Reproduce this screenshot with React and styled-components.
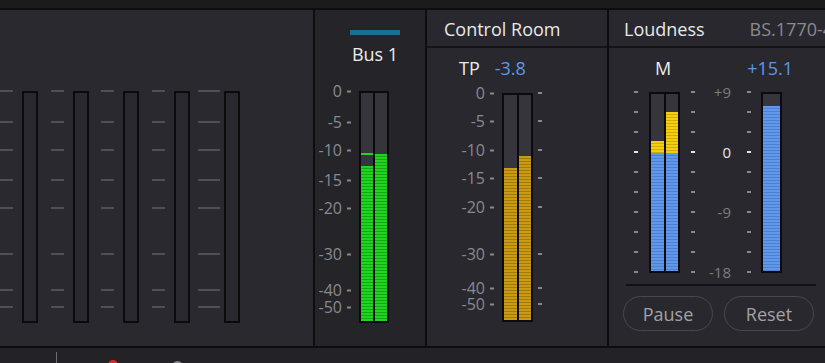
import React from 'react';
import styled, { createGlobalStyle } from 'styled-components';

const GlobalStyle = createGlobalStyle`
  html, body {
    margin: 0;
    padding: 0;
    background: #1b1b1c;
  }
  body {
    font-family: "Open Sans", "Noto Sans", sans-serif;
  }
`;

const DB_LABELS = ['0', '-5', '-10', '-15', '-20', '-30', '-40', '-50'];
const MIX_MARKS = [0, 31, 59, 89, 117, 163, 199, 216];
const CR_MARKS = [0, 28, 57, 85, 114, 161, 195, 211];
const LU_ROWS = ['+9', '', '', '0', '', '', '-9', '', '', '-18'];

const TONES = {
  green: ['#22d422', '#13a913'],
  gold: ['#c99a12', '#a07a0a'],
  yellow: ['#f5ce10', '#cdac06'],
  blue: ['#6098ea', '#4c80d2'],
};

const Screen = styled.div`
  width: 825px;
  height: 363px;
  display: flex;
  flex-direction: column;
  overflow: hidden;
  background: #0d0d0f;
`;

const TopStrip = styled.div`
  flex: none;
  height: 8px;
  background: #1b1b1c;
  border-bottom: 2px solid #0d0d0f;
`;

const Panels = styled.div`
  flex: none;
  display: flex;
  gap: 2px;
  height: 336px;
  overflow: hidden;
  background: #0d0d0f;
  border-bottom: 2px solid #0d0d0f;
`;

const Panel = styled.div`
  flex: none;
  width: ${p => p.$w}px;
  display: flex;
  flex-direction: column;
  background: ${p => p.$bg || '#28282e'};
`;

const PanelHeader = styled.div`
  display: flex;
  align-items: center;
  height: 34px;
  padding: 2px 0 0 ${p => p.$pad}px;
  border-bottom: 2px solid #141417;
  font-size: 18px;
  color: #e8e8e8;
  white-space: nowrap;
`;

const Standard = styled.span`
  margin-left: 45px;
  color: #8a8a8e;
`;

/* meters */
const MeterBox = styled.div`
  flex: none;
  box-sizing: border-box;
  display: flex;
  gap: 2px;
  width: ${p => p.$w}px;
  height: ${p => p.$h}px;
  margin-top: ${p => p.$top || 0}px;
  margin-left: ${p => p.$left || 0}px;
  border: 2px solid #0b0b0d;
  background: #0b0b0d;
`;

const Lane = styled.div`
  flex: 1;
  display: flex;
  flex-direction: column;
  justify-content: flex-end;
  background: ${p => p.$bg || '#35353b'};
`;

const Fill = styled.div`
  flex: none;
  height: ${p => p.$h}px;
  background: repeating-linear-gradient(
    to bottom,
    ${p => TONES[p.$tone][0]} 0 2px,
    ${p => TONES[p.$tone][1]} 2px 3px
  );
`;

const Hold = styled.div`
  flex: none;
  height: 2px;
  margin-bottom: ${p => p.$gap}px;
  background: ${p => TONES[p.$tone][0]};
`;

/* dB scales */
const DbScale = styled.div`
  position: relative;
  flex: none;
  width: ${p => p.$w}px;
  height: ${p => p.$h}px;
  margin-left: ${p => p.$left || 0}px;
`;

const DbMark = styled.div`
  position: absolute;
  right: 0;
  top: ${p => p.$y}px;
  transform: translateY(-50%);
  display: flex;
  align-items: center;
  gap: 5px;
  font-size: 16px;
  line-height: 13px;
  color: #8a8a8e;
  white-space: nowrap;
`;

const Tick = styled.span`
  display: block;
  width: 4px;
  height: 2px;
  background: ${p => (p.$bright ? '#e6e6e6' : '#88888c')};
`;

/* mixer (left) */
const Mixer = styled.div`
  display: grid;
  grid-template-columns: repeat(5, 50.5px);
  padding-top: 81px;
`;

const Strip = styled.div`
  display: grid;
  grid-template-columns: 22px 16px;
`;

const GuideCol = styled.div`
  position: relative;
  width: ${p => p.$w}px;
  height: 232px;
  margin-left: ${p => p.$shift || 0}px;
`;

const Guide = styled.div`
  position: absolute;
  left: 0;
  right: 0;
  top: ${p => p.$y}px;
  height: 2px;
  transform: translateY(-50%);
  background: #4f4f56;
`;

/* bus */
const BusHead = styled.div`
  display: flex;
  flex-direction: column;
  align-items: center;
  padding: 20px 0 0 10px;
`;

const BusColor = styled.div`
  width: 50px;
  height: 5px;
  background: #1b6e90;
`;

const BusName = styled.div`
  margin-top: 7px;
  font-size: 18px;
  line-height: 24px;
  color: #ececec;
`;

const MeterRow = styled.div`
  display: flex;
  align-items: flex-start;
  margin-top: ${p => p.$top || 0}px;
  padding-left: ${p => p.$pad || 0}px;
`;

/* control room */
const Readout = styled.div`
  display: flex;
  padding: 8px 0 0 ${p => p.$pad}px;
  font-size: 18px;
  line-height: 24px;
  color: #ececec;
`;

const Value = styled.span`
  margin-left: ${p => p.$gap}px;
  color: #5a98ec;
`;

/* loudness */
const LuScale = styled.div`
  flex: none;
  display: flex;
  flex-direction: column;
  width: ${p => p.$w}px;
  margin-left: ${p => p.$left || 0}px;
`;

const LuRow = styled.div`
  height: 20px;
  display: flex;
  align-items: center;
  justify-content: flex-end;
  font-size: 15px;
  color: ${p => (p.$bright ? '#e6e6e6' : '#7c7c80')};
`;

const Rule = styled.div`
  height: 2px;
  width: 190px;
  margin: 2px 0 0 17px;
  background: #111114;
`;

const Buttons = styled.div`
  display: flex;
  gap: 11px;
  margin: 10px 0 0 14px;
`;

const Pill = styled.button`
  width: 90px;
  height: 35px;
  padding: 0;
  border: 1.5px solid #47474d;
  border-radius: 18px;
  background: transparent;
  color: #a2a2a4;
  font-family: "Open Sans", "Noto Sans", sans-serif;
  font-size: 18px;
`;

/* status bar */
const StatusBar = styled.div`
  flex: 1;
  display: flex;
  align-items: flex-start;
  padding: 4px 0 0 56px;
  background: #222227;
  overflow: hidden;
`;

const Divider = styled.div`
  flex: none;
  width: 1px;
  height: 14px;
  background: #6e6e70;
`;

const RecDot = styled.div`
  flex: none;
  width: 10px;
  height: 10px;
  margin: 8px 0 0 51px;
  border-radius: 50%;
  background: #d32a2a;
`;

const Ring = styled.div`
  flex: none;
  width: 7px;
  height: 7px;
  margin: 9px 0 0 54px;
  border: 2px solid #8a8a8e;
  border-radius: 50%;
`;

const DbLabels = ({ marks, width, height, left, labels = true }) => (
  <DbScale $w={width} $h={height} $left={left}>
    {marks.map((y, i) => (
      <DbMark key={i} $y={y}>
        {labels && DB_LABELS[i]}
        <Tick />
      </DbMark>
    ))}
  </DbScale>
);

const LuTicks = ({ left }) => (
  <LuScale $w={4} $left={left}>
    {LU_ROWS.map((v, i) => (
      <LuRow key={i}>
        <Tick $bright={v === '0'} />
      </LuRow>
    ))}
  </LuScale>
);

const App = () => (
  <>
    <GlobalStyle />
    <Screen>
      <TopStrip />
      <Panels>
        <Panel $w={313} $bg="#29292f">
          <Mixer>
            {[0, 1, 2, 3, 4].map(i => (
              <Strip key={i}>
                <GuideCol $w={i === 4 ? 22 : 13} $shift={i === 4 ? -4 : 0}>
                  {MIX_MARKS.map(y => (
                    <Guide key={y} $y={y} />
                  ))}
                </GuideCol>
                <MeterBox $w={16} $h={232}>
                  <Lane $bg="#29292f" />
                </MeterBox>
              </Strip>
            ))}
          </Mixer>
        </Panel>

        <Panel $w={110} $bg="#242429">
          <BusHead>
            <BusColor />
            <BusName>Bus 1</BusName>
          </BusHead>
          <MeterRow $top={25}>
            <DbLabels marks={MIX_MARKS} width={36} height={232} />
            <MeterBox $w={30} $h={232} $left={8}>
              <Lane>
                <Hold $tone="green" $gap={11} />
                <Fill $tone="green" $h={155} />
              </Lane>
              <Lane>
                <Fill $tone="green" $h={167} />
              </Lane>
            </MeterBox>
          </MeterRow>
        </Panel>

        <Panel $w={180}>
          <PanelHeader $pad={17}>Control Room</PanelHeader>
          <Readout $pad={32}>
            TP<Value $gap={15}>-3.8</Value>
          </Readout>
          <MeterRow $top={13} $pad={22}>
            <DbLabels marks={CR_MARKS} width={45} height={229} />
            <MeterBox $w={31} $h={229} $left={8}>
              <Lane>
                <Fill $tone="gold" $h={152} />
              </Lane>
              <Lane>
                <Fill $tone="gold" $h={164} />
              </Lane>
            </MeterBox>
            <DbLabels marks={CR_MARKS} width={4} height={229} left={5} labels={false} />
          </MeterRow>
        </Panel>

        <Panel $w={240}>
          <PanelHeader $pad={15}>
            Loudness<Standard>BS.1770-4</Standard>
          </PanelHeader>
          <Readout $pad={46}>
            M<Value $gap={76}>+15.1</Value>
          </Readout>
          <MeterRow $top={2} $pad={25}>
            <LuTicks />
            <MeterBox $w={31} $h={181} $top={10} $left={11}>
              <Lane>
                <Fill $tone="yellow" $h={12} />
                <Fill $tone="blue" $h={118} />
              </Lane>
              <Lane>
                <Fill $tone="yellow" $h={41} />
                <Fill $tone="blue" $h={118} />
              </Lane>
            </MeterBox>
            <LuTicks left={11} />
            <LuScale $w={32} $left={4}>
              {LU_ROWS.map((v, i) => (
                <LuRow key={i} $bright={v === '0'}>
                  {v}
                </LuRow>
              ))}
            </LuScale>
            <LuTicks left={16} />
            <MeterBox $w={21} $h={181} $top={10} $left={10}>
              <Lane>
                <Fill $tone="blue" $h={165} />
              </Lane>
            </MeterBox>
          </MeterRow>
          <Rule />
          <Buttons>
            <Pill>Pause</Pill>
            <Pill>Reset</Pill>
          </Buttons>
        </Panel>
      </Panels>
      <StatusBar>
        <Divider />
        <RecDot />
        <Ring />
      </StatusBar>
    </Screen>
  </>
);

export default App;
